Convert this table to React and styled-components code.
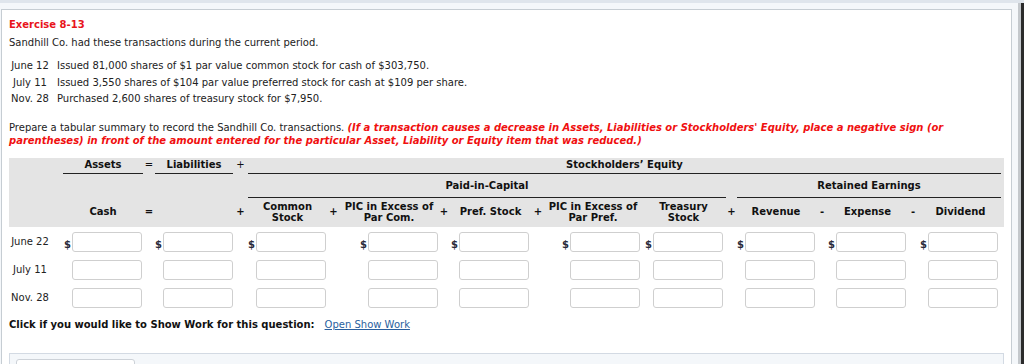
import styled, { createGlobalStyle } from "styled-components";

const GlobalStyle = createGlobalStyle`
  html, body {
    margin: 0;
    padding: 0;
    background: #f4f7fa;
  }
  body {
    font-family: "DejaVu Sans", Verdana, sans-serif;
    font-size: 10px;
    color: #222;
    overflow: hidden;
  }
`;

// column widths: date, then account / operator pairs across the equation
const COLUMNS = "54px 80px 12px 78px 15px 79px 13px 98px 12px 81px 14px 96px 85px 11px 78px 14px 77px 14px 81px 2px";

const Page = styled.div`
  display: flex;
  width: 1024px;
  height: 364px;
  border-top: 3px solid #dfe5ec;
  box-sizing: border-box;
`;

const Main = styled.div`
  flex: 1;
  padding: 6px 6px 0 1px;
`;

const ScrollEdge = styled.div`
  width: 3px;
  border-left: 3px solid #c4c8cc;
  background: #2b2b2b;
`;

const Panel = styled.div`
  background: #fff;
  border: 1px solid #c6cdd3;
  border-bottom: none;
  height: 400px;
  padding: 7px 7px 0 7px;
`;

const Title = styled.div`
  color: #e8141b;
  font-weight: bold;
  line-height: 16px;
`;

const Intro = styled.div`
  margin-top: 2px;
  line-height: 16px;
`;

const TransactionList = styled.div`
  margin-top: 7px;
`;

const Transaction = styled.div`
  display: flex;
  line-height: 16.5px;
`;

const DateLabel = styled.span`
  width: 42px;
  text-align: center;
  flex-shrink: 0;
`;

const Detail = styled.span`
  margin-left: 6px;
`;

const Instructions = styled.div`
  margin-top: 13px;
  line-height: 13px;
`;

const Warning = styled.span`
  color: #f01010;
  font-weight: bold;
  font-style: italic;
`;

const HeaderGrid = styled.div`
  margin-top: 11px;
  display: grid;
  grid-template-columns: ${COLUMNS};
  background: #e4e4e4;
  font-weight: bold;
  color: #111;
`;

const TopCell = styled.div`
  grid-column: ${(p) => p.$col};
  grid-row: ${(p) => p.$row};
  padding: ${(p) => (p.$row === 1 ? "0" : "5px")} ${(p) => p.$inset || "0"} 0;
  text-align: center;
`;

const Ruled = styled.div`
  line-height: 14px;
  padding-bottom: ${(p) => (p.$row === 1 ? "1px" : "4px")};
  border-bottom: 1px solid #222;
  text-align: center;
`;

const Sign = styled.div`
  grid-column: ${(p) => p.$col};
  grid-row: ${(p) => p.$row};
  line-height: 14px;
  text-align: center;
  font-weight: ${(p) => (p.$light ? "normal" : "bold")};
  align-self: ${(p) => (p.$row === 3 ? "center" : "start")};
`;

const Label = styled.div`
  grid-column: ${(p) => p.$col};
  grid-row: 3;
  height: 29px;
  display: flex;
  align-items: center;
  justify-content: center;
  text-align: center;
  line-height: 11.5px;
`;

const BodyGrid = styled.div`
  display: grid;
  grid-template-columns: ${COLUMNS};
  row-gap: 8px;
  padding-top: 5px;
`;

const RowDate = styled.div`
  grid-column: 1;
  width: 42px;
  text-align: center;
  align-self: center;
`;

const EntryCell = styled.div`
  grid-column: ${(p) => p.$col};
  display: flex;
  justify-content: flex-end;
  align-items: flex-end;
  padding-right: ${(p) => p.$pad || 0}px;
`;

const Dollar = styled.span`
  font-size: 10px;
  font-weight: bold;
  color: #2a2a3a;
  line-height: 10px;
  margin: 0 1px 2px 0;
`;

const Amount = styled.input`
  width: 70px;
  height: 20px;
  box-sizing: border-box;
  border: 1px solid #cfcfcf;
  border-radius: 3px;
  background: #fff;
  padding: 0 3px;
  font: inherit;
  outline: none;
`;

const WorkLine = styled.div`
  margin-top: 10px;
  line-height: 14px;
  display: flex;
  gap: 10px;
`;

const WorkPrompt = styled.span`
  font-weight: bold;
  color: #111;
`;

const WorkLink = styled.a`
  color: #2a5f9e;
  text-decoration: underline;
`;

const Footer = styled.div`
  margin-top: 21px;
  background: #f4f7fa;
  border: 1px solid #d3dae3;
  height: 40px;
  padding: 5px 6px;
`;

const FooterButton = styled.div`
  width: 117px;
  height: 24px;
  background: #fff;
  border: 1px solid #cdd2d8;
  border-radius: 3px;
`;

const transactions = [
  ["June 12", "Issued 81,000 shares of $1 par value common stock for cash of $303,750."],
  ["July 11", "Issued 3,550 shares of $104 par value preferred stock for cash at $109 per share."],
  ["Nov. 28", "Purchased 2,600 shares of treasury stock for $7,950."],
];

// account columns with their right padding
const accounts = [
  { col: 2, pad: 1 },
  { col: 4, pad: 0 },
  { col: 6, pad: 1 },
  { col: 8, pad: 0 },
  { col: 10, pad: 2 },
  { col: 12, pad: 1 },
  { col: 13, pad: 3 },
  { col: 15, pad: 0 },
  { col: 17, pad: 0 },
  { col: 19, pad: 3 },
];

const labels = [
  { col: 2, text: "Cash" },
  { col: 6, text: <>Common<br />Stock</> },
  { col: 8, text: <>PIC in Excess of<br />Par Com.</> },
  { col: 10, text: "Pref. Stock" },
  { col: 12, text: <>PIC in Excess of<br />Par Pref.</> },
  { col: 13, text: <>Treasury<br />Stock</> },
  { col: 15, text: "Revenue" },
  { col: 17, text: "Expense" },
  { col: 19, text: "Dividend" },
];

const signs = [
  { col: 3, text: "=" },
  { col: 5, text: "+" },
  { col: 7, text: "+" },
  { col: 9, text: "+" },
  { col: 11, text: "+" },
  { col: 14, text: "+" },
  { col: 16, text: "-" },
  { col: 18, text: "-" },
];

const rows = ["June 22", "July 11", "Nov. 28"];

export default function App() {
  return (
    <>
      <GlobalStyle />
      <Page>
        <Main>
          <Panel>
            <Title>Exercise 8-13</Title>
            <Intro>Sandhill Co. had these transactions during the current period.</Intro>
            <TransactionList>
              {transactions.map(([date, text]) => (
                <Transaction key={date}>
                  <DateLabel>{date}</DateLabel>
                  <Detail>{text}</Detail>
                </Transaction>
              ))}
            </TransactionList>
            <Instructions>
              Prepare a tabular summary to record the Sandhill Co. transactions.{" "}
              <Warning>
                (If a transaction causes a decrease in Assets, Liabilities or Stockholders' Equity, place a negative sign (or
                parentheses) in front of the amount entered for the particular Asset, Liability or Equity item that was reduced.)
              </Warning>
            </Instructions>

            <HeaderGrid>
              <TopCell $col="2" $row={1} $inset="1px 0 2px">
                <Ruled $row={1}>Assets</Ruled>
              </TopCell>
              <Sign $col="3" $row={1} $light>=</Sign>
              <TopCell $col="4" $row={1} $inset="0 0 2px">
                <Ruled $row={1}>Liabilities</Ruled>
              </TopCell>
              <Sign $col="5" $row={1} $light>+</Sign>
              <TopCell $col="6 / 20" $row={1}>
                <Ruled $row={1}>Stockholders’ Equity</Ruled>
              </TopCell>

              <TopCell $col="6 / 14" $row={2}>
                <Ruled $row={2}>Paid-in-Capital</Ruled>
              </TopCell>
              <TopCell $col="15 / 20" $row={2}>
                <Ruled $row={2}>Retained Earnings</Ruled>
              </TopCell>

              {labels.map((l) => (
                <Label key={l.col} $col={l.col}>{l.text}</Label>
              ))}
              {signs.map((s) => (
                <Sign key={s.col} $col={s.col} $row={3}>{s.text}</Sign>
              ))}
            </HeaderGrid>

            <BodyGrid>
              {rows.map((date, r) => (
                <div key={date} style={{ display: "contents" }}>
                  <RowDate style={{ gridRow: r + 1 }}>{date}</RowDate>
                  {accounts.map((a) => (
                    <EntryCell key={a.col} $col={a.col} $pad={a.pad} style={{ gridRow: r + 1 }}>
                      {r === 0 && <Dollar>$</Dollar>}
                      <Amount type="text" />
                    </EntryCell>
                  ))}
                </div>
              ))}
            </BodyGrid>

            <WorkLine>
              <WorkPrompt>Click if you would like to Show Work for this question:</WorkPrompt>
              <WorkLink href="#">Open Show Work</WorkLink>
            </WorkLine>

            <Footer>
              <FooterButton />
            </Footer>
          </Panel>
        </Main>
        <ScrollEdge />
      </Page>
    </>
  );
}
